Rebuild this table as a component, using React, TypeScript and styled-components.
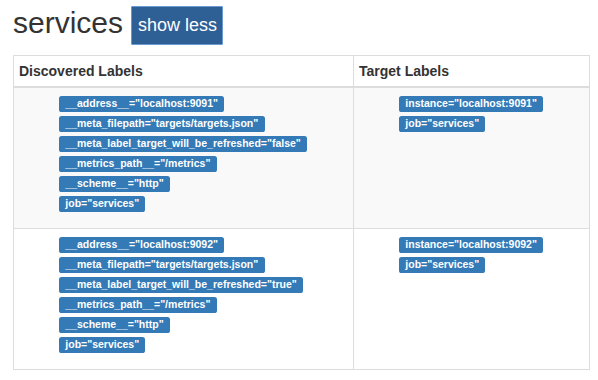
import React from "react";
import styled, { createGlobalStyle } from "styled-components";

const GlobalStyle = createGlobalStyle`
  html, body { margin: 0; padding: 0; background: #fff; }
  body {
    font-family: "Liberation Sans", Arial, Helvetica, sans-serif;
    font-size: 14px;
    line-height: 20px;
    color: #333;
  }
  * { box-sizing: border-box; }
`;

const Page = styled.div`
  padding: 6px 8px 0 13px;
`;

const Header = styled.div`
  display: flex;
  align-items: flex-start;
  gap: 8px;
  height: 39px;
`;

const Title = styled.h2`
  margin: 0;
  font-size: 30px;
  font-weight: normal;
  line-height: 33px;
  color: #333;
`;

const ToggleButton = styled.button`
  height: 39px;
  padding: 0 5px 0 6px;
  border: 1px solid #6b9ad3;
  border-radius: 1px;
  background: #2e6096;
  color: #fff;
  font-family: "Liberation Sans", Arial, sans-serif;
  font-size: 18px;
  line-height: 37px;
  cursor: pointer;
`;

const Table = styled.div`
  margin-top: 10px;
  width: 577px;
  border: 1px solid #ddd;
  display: grid;
  grid-template-columns: 339px 1fr;
`;

const HeadCell = styled.div<{ $second?: boolean }>`
  padding: 5px;
  height: 32px;
  font-weight: bold;
  line-height: 20px;
  border-bottom: 2px solid #ddd;
  border-left: ${(p) => (p.$second ? "1px solid #ddd" : "none")};
`;

const Cell = styled.div<{ $second?: boolean; $striped?: boolean; $last?: boolean }>`
  padding: 5px;
  background: ${(p) => (p.$striped ? "#f9f9f9" : "#fff")};
  border-left: ${(p) => (p.$second ? "1px solid #ddd" : "none")};
  border-bottom: ${(p) => (p.$last ? "none" : "1px solid #ddd")};
`;

const LabelList = styled.ul`
  list-style: none;
  margin: 0 0 10px 0;
  padding: 0 0 0 40px;
`;

const LabelItem = styled.li`
  display: flex;
  align-items: flex-start;
  height: 20px;
  padding-top: 3px;
`;

const Label = styled.span`
  display: block;
  height: 16px;
  padding: 2px 6.3px 0;
  font-size: 10.5px;
  font-weight: bold;
  line-height: 11px;
  color: #fff;
  background: #337ab7;
  border-radius: 2.6px;
  white-space: nowrap;
`;

type Target = { discovered: string[]; target: string[] };

const targets: Target[] = [
  {
    discovered: [
      '__address__="localhost:9091"',
      '__meta_filepath="targets/targets.json"',
      '__meta_label_target_will_be_refreshed="false"',
      '__metrics_path__="/metrics"',
      '__scheme__="http"',
      'job="services"',
    ],
    target: ['instance="localhost:9091"', 'job="services"'],
  },
  {
    discovered: [
      '__address__="localhost:9092"',
      '__meta_filepath="targets/targets.json"',
      '__meta_label_target_will_be_refreshed="true"',
      '__metrics_path__="/metrics"',
      '__scheme__="http"',
      'job="services"',
    ],
    target: ['instance="localhost:9092"', 'job="services"'],
  },
];

const Labels: React.FC<{ items: string[] }> = ({ items }) => (
  <LabelList>
    {items.map((l) => (
      <LabelItem key={l}>
        <Label>{l}</Label>
      </LabelItem>
    ))}
  </LabelList>
);

export default function App() {
  return (
    <>
      <GlobalStyle />
      <Page>
        <Header>
          <Title>services</Title>
          <ToggleButton>show less</ToggleButton>
        </Header>
        <Table>
          <HeadCell>Discovered Labels</HeadCell>
          <HeadCell $second>Target Labels</HeadCell>
          {targets.map((t, i) => {
            const last = i === targets.length - 1;
            const striped = i % 2 === 0;
            return (
              <React.Fragment key={i}>
                <Cell $striped={striped} $last={last}>
                  <Labels items={t.discovered} />
                </Cell>
                <Cell $second $striped={striped} $last={last}>
                  <Labels items={t.target} />
                </Cell>
              </React.Fragment>
            );
          })}
        </Table>
      </Page>
    </>
  );
}
